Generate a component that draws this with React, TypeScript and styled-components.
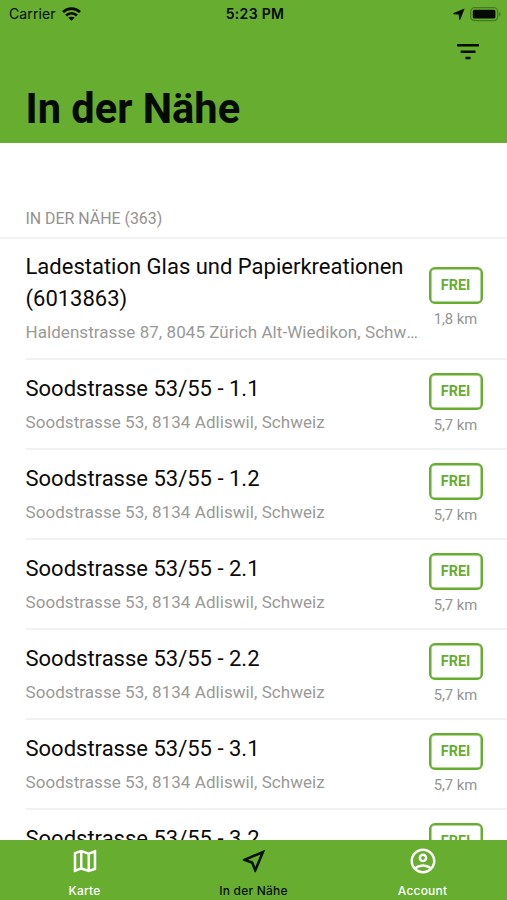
import React from "react";
import styled, { createGlobalStyle, css } from "styled-components";

const GREEN = "#67ad30";

const GlobalStyle = createGlobalStyle`
  * { box-sizing: border-box; }
  body { margin: 0; background: #fff; }
`;

const Screen = styled.div`
  display: flex;
  flex-direction: column;
  width: 507px;
  height: 900px;
  overflow: hidden;
  background: #fff;
  color: #0b0b0b;
  font-family: Roboto, sans-serif;
`;

const Header = styled.header`
  flex: none;
  height: 142.5px;
  background: ${GREEN};
  color: #050a02;
  display: flex;
  flex-direction: column;
`;

const StatusBar = styled.div`
  display: grid;
  grid-template-columns: 1fr auto 1fr;
  align-items: center;
  height: 28px;
  padding: 0 6px 0 9px;
  font: 400 14px/28px Inter, sans-serif;
`;

const Carrier = styled.div`
  display: flex;
  align-items: center;
  gap: 6px;
  letter-spacing: 0.1px;
`;

const Clock = styled.div`
  font-weight: 600;
  font-size: 14px;
  letter-spacing: 0.3px;
`;

const Indicators = styled.div`
  display: flex;
  justify-content: flex-end;
  align-items: center;
  gap: 5px;
`;

const Toolbar = styled.div`
  display: flex;
  justify-content: flex-end;
  height: 48px;
  padding: 16px 28px 0 0;
`;

const Title = styled.h1`
  margin: 0;
  padding-left: 25.5px;
  font-size: 41.6px;
  line-height: 66px;
  font-weight: 700;
`;

const List = styled.main`
  flex: 1;
  min-height: 0;
  overflow: hidden;
`;

const SectionHeader = styled.h2`
  margin: 0;
  height: 96.5px;
  padding: 66px 0 0 25.5px;
  border-bottom: 2px solid #f3f3f3;
  color: #929292;
  font-size: 15.9px;
  line-height: 20px;
  font-weight: 400;
`;

const Row = styled.article<{ $tall?: boolean }>`
  display: flex;
  align-items: center;
  height: ${(p) => (p.$tall ? 121 : 90)}px;
  margin-left: 25.5px;
  padding-right: 24.5px;
  border-bottom: 2px solid #f2f2f2;
`;

const Details = styled.div<{ $tall?: boolean }>`
  flex: 1;
  min-width: 0;
  padding-top: 1px;
  padding-bottom: ${(p) => (p.$tall ? 2 : 0)}px;
`;

const Name = styled.div`
  font-size: 22px;
  line-height: 32px;
`;

const Address = styled.div`
  margin-top: 3px;
  width: 393px;
  color: #999;
  font-size: 17px;
  letter-spacing: 0.06px;
  line-height: 28px;
  white-space: nowrap;
  overflow: hidden;
  text-overflow: ellipsis;
`;

const Availability = styled.div`
  flex: none;
  width: 54px;
  padding-bottom: 1px;
  display: flex;
  flex-direction: column;
  align-items: center;
`;

const Badge = styled.span`
  width: 54px;
  height: 37px;
  border: 2px solid ${GREEN};
  border-radius: 6px;
  box-shadow: inset 0 0 0 0.5px ${GREEN};
  color: ${GREEN};
  font-size: 14.4px;
  line-height: 33px;
  font-weight: 700;
  text-align: center;
`;

const Distance = styled.span`
  margin-top: 5px;
  color: #949494;
  font-size: 14.8px;
  line-height: 20px;
  white-space: nowrap;
`;

const TabBar = styled.nav`
  flex: none;
  display: grid;
  grid-template-columns: repeat(3, 1fr);
  height: 60px;
  background: ${GREEN};
`;

const Tab = styled.a<{ $active?: boolean }>`
  display: flex;
  flex-direction: column;
  align-items: center;
  padding-top: 6px;
  color: #fff;
  font: 500 12px/16px Inter, sans-serif;
  letter-spacing: 0.2px;
  ${(p) => p.$active && css`color: #081002;`}
`;

const TabIcon = styled.svg`
  width: 30px;
  height: 30px;
  margin-bottom: 7px;
`;

const stations = ["1.1", "1.2", "2.1", "2.2", "3.1", "3.2"].map((n) => ({
  name: `Soodstrasse 53/55 - ${n}`,
  address: "Soodstrasse 53, 8134 Adliswil, Schweiz",
  distance: "5,7 km",
  tall: false,
}));

const rows = [
  {
    name: "Ladestation Glas und Papierkreationen (6013863)",
    address: "Haldenstrasse 87, 8045 Zürich Alt-Wiedikon, Schweiz",
    distance: "1,8 km",
    tall: true,
  },
  ...stations,
];

const WifiIcon = () => (
  <svg width="19" height="14" viewBox="0 0 19 14" fill="none" stroke="currentColor" strokeWidth="2.7">
    <path d="M1 5C5.8.4 13.2.4 18 5" />
    <path d="M4.1 8.5c3.1-3 7.7-3 10.8 0" />
    <path d="M6.4 10.8c1.6-1.5 4.6-1.5 6.2 0L9.5 13.8z" fill="currentColor" stroke="none" />
  </svg>
);

const LocationIcon = () => (
  <svg width="12" height="12" viewBox="0 0 12 12" fill="currentColor">
    <path d="M11.6.5 7.3 11.4q-.7.7-1.1-.2L5.7 6.6.9 6.2q-1-.4-.2-1.1z" />
  </svg>
);

const BatteryIcon = () => (
  <svg width="31" height="15" viewBox="0 0 31 15">
    <rect x=".7" y=".7" width="27" height="13" rx="4" fill="none" stroke="#447b1c" strokeWidth="1.2" />
    <rect x="2.8" y="2.8" width="22.6" height="8.8" rx="1.6" fill="#050a02" />
    <path d="M29 5v4.4q1.5-.7 1.5-2.2T29 5z" fill="#447b1c" />
  </svg>
);

const FilterIcon = () => (
  <svg width="22" height="16" viewBox="0 0 22 16" fill="currentColor">
    <path d="M0 0h22v2.6H0zM3.7 6.4h14.8V9H3.7zM8.5 12.7h5v2.6h-5z" />
  </svg>
);

export default function App() {
  return (
    <Screen>
      <GlobalStyle />
      <Header>
        <StatusBar>
          <Carrier>
            Carrier
            <WifiIcon />
          </Carrier>
          <Clock>5:23 PM</Clock>
          <Indicators>
            <LocationIcon />
            <BatteryIcon />
          </Indicators>
        </StatusBar>
        <Toolbar>
          <FilterIcon />
        </Toolbar>
        <Title>In der Nähe</Title>
      </Header>
      <List>
        <SectionHeader>IN DER NÄHE (363)</SectionHeader>
        {rows.map((row) => (
          <Row key={row.name} $tall={row.tall}>
            <Details $tall={row.tall}>
              <Name>{row.name}</Name>
              <Address>{row.address}</Address>
            </Details>
            <Availability>
              <Badge>FREI</Badge>
              <Distance>{row.distance}</Distance>
            </Availability>
          </Row>
        ))}
      </List>
      <TabBar>
        <Tab>
          <TabIcon viewBox="0 0 24 24" fill="currentColor">
            <path d="m20.5 3-.16.03L15 5.1 9 3 3.36 4.9c-.21.07-.36.25-.36.48V20.5c0 .28.22.5.5.5l.16-.03L9 18.9l6 2.1 5.64-1.9c.21-.07.36-.25.36-.48V3.5c0-.28-.22-.5-.5-.5zM10 5.47l4 1.4v11.66l-4-1.4V5.47zm-5 .99 3-1.01v11.7l-3 1.16V6.46zm14 11.08-3 1.01V6.86l3-1.16v11.84z" />
          </TabIcon>
          Karte
        </Tab>
        <Tab $active>
          <TabIcon viewBox="0 0 24 24" fill="currentColor">
            <path d="m17.27 6.73-4.24 10.13-1.32-3.42-.32-.83-.82-.32-3.43-1.33 10.13-4.23M21 3 3 10.53v.98l6.84 2.65L12.48 21h.98L21 3z" />
          </TabIcon>
          In der Nähe
        </Tab>
        <Tab>
          <TabIcon viewBox="0 0 24 24" fill="currentColor">
            <path d="M12 2C6.48 2 2 6.48 2 12s4.48 10 10 10 10-4.48 10-10S17.52 2 12 2zM7.07 18.28c.43-.9 3.05-1.78 4.93-1.78s4.51.88 4.93 1.78C15.57 19.36 13.86 20 12 20s-3.57-.64-4.93-1.72zm11.29-1.45c-1.43-1.74-4.9-2.33-6.36-2.33s-4.93.59-6.36 2.33C4.62 15.49 4 13.82 4 12c0-4.41 3.59-8 8-8s8 3.59 8 8c0 1.82-.62 3.49-1.64 4.83zM12 6c-1.94 0-3.5 1.56-3.5 3.5S10.06 13 12 13s3.5-1.56 3.5-3.5S13.94 6 12 6zm0 5c-.83 0-1.5-.67-1.5-1.5S11.17 8 12 8s1.5.67 1.5 1.5S12.83 11 12 11z" />
          </TabIcon>
          Account
        </Tab>
      </TabBar>
    </Screen>
  );
}
